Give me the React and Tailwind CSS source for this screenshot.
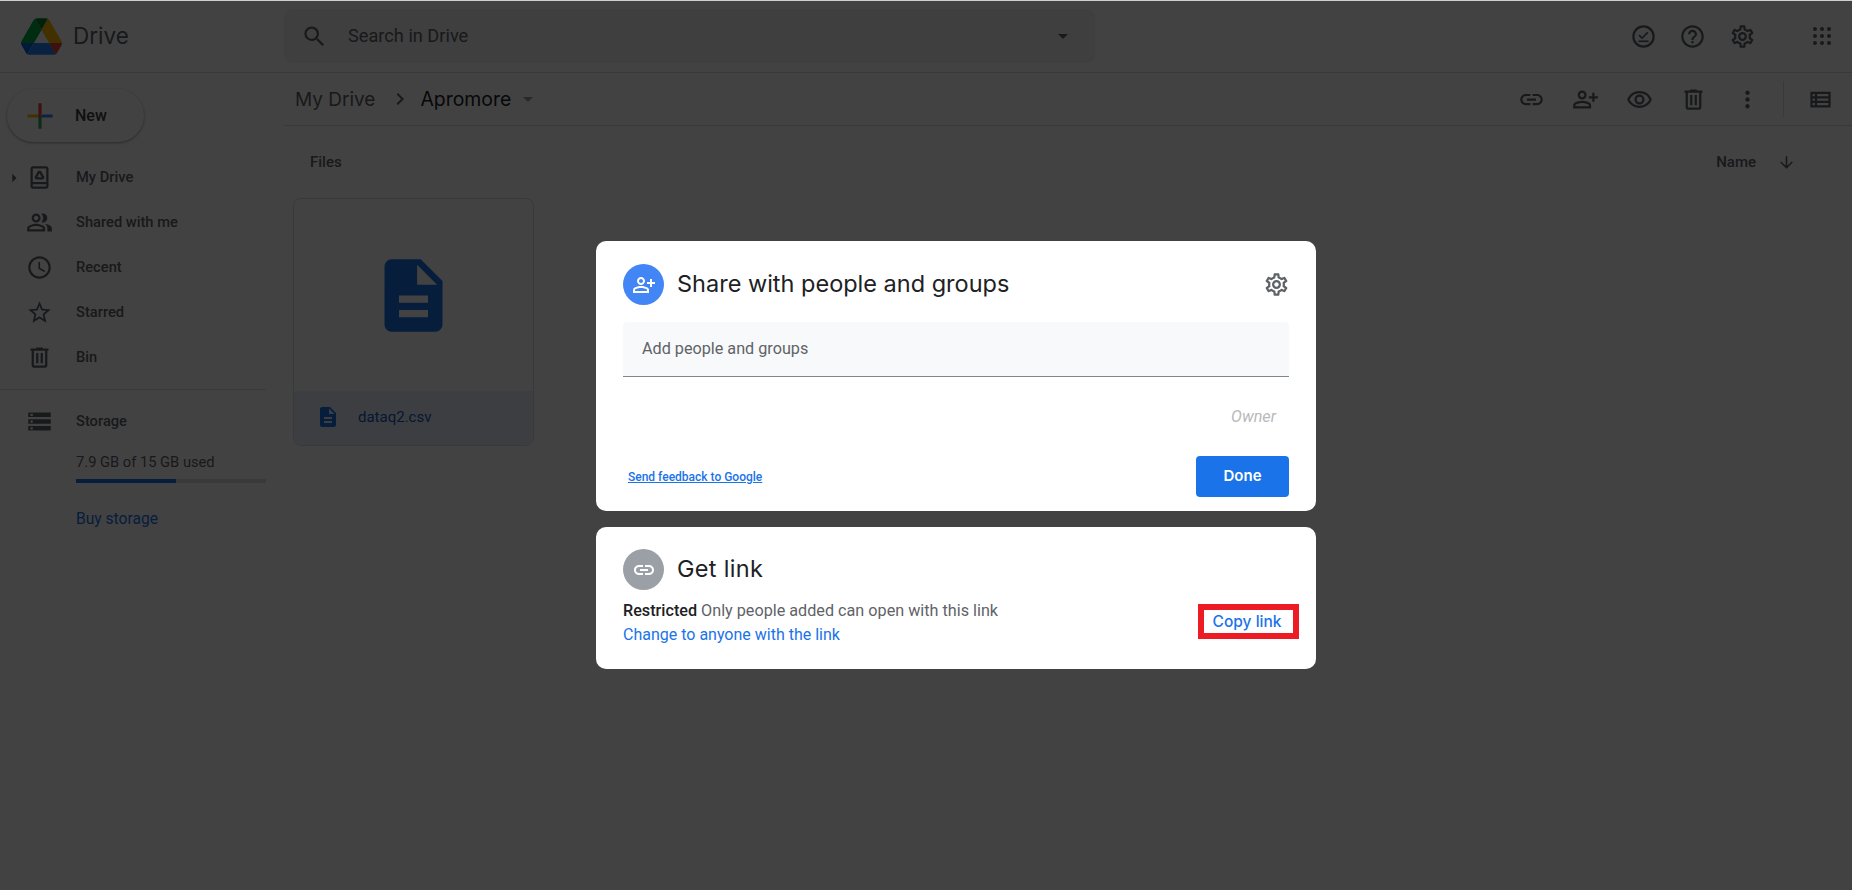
import {
  MdSearch, MdArrowDropDown, MdArrowRight, MdChevronRight, MdOutlineHelpOutline, MdOutlineSettings,
  MdLink, MdOutlinePersonAddAlt, MdOutlineRemoveRedEye, MdMoreVert, MdOutlineViewList, MdArrowDownward,
  MdOutlinePeopleAlt, MdOutlineSchedule, MdStarBorder, MdStorage, MdDescription,
} from 'react-icons/md';

const roboto = 'font-[Roboto,sans-serif]';
const gsans = 'font-[Inter,Roboto,sans-serif]';

const DriveLogo = () => (
  <svg viewBox="0 0 87.3 78" className="w-[41px] h-[37px]">
    <path d="m6.6 66.85 3.85 6.65c.8 1.4 1.95 2.5 3.3 3.3l13.75-23.8h-27.5c0 1.55.4 3.1 1.2 4.5z" fill="#0066da" />
    <path d="m43.65 25-13.75-23.8c-1.35.8-2.5 1.9-3.3 3.3l-25.4 44a9.06 9.06 0 0 0 -1.2 4.5h27.5z" fill="#00ac47" />
    <path d="m73.55 76.8c1.35-.8 2.5-1.9 3.3-3.3l1.6-2.75 7.65-13.25c.8-1.4 1.2-2.95 1.2-4.5h-27.502l5.852 11.5z" fill="#ea4335" />
    <path d="m43.65 25 13.75-23.8c-1.35-.8-2.9-1.2-4.5-1.2h-18.5c-1.6 0-3.15.45-4.5 1.2z" fill="#00832d" />
    <path d="m59.8 53h-32.3l-13.75 23.8c1.35.8 2.9 1.2 4.5 1.2h50.8c1.6 0 3.15-.45 4.5-1.2z" fill="#2684fc" />
    <path d="m73.4 26.5-12.7-22c-.8-1.4-1.95-2.5-3.3-3.3l-13.75 23.8 16.15 28h27.45c0-1.55-.4-3.1-1.2-4.5z" fill="#ffba00" />
  </svg>
);

const PlusLogo = () => (
  <svg viewBox="0 0 36 36" className="w-[38px] h-[38px]">
    <path fill="#34A853" d="M16.5 16v14h3V20z" />
    <path fill="#4285F4" d="M30 16.5H20l-4 3h14z" />
    <path fill="#FBBC05" d="M6 16.5v3h10l4-3z" />
    <path fill="#EA4335" d="M19.5 16V6h-3v14z" />
  </svg>
);

const TasksIcon = () => (
  <svg viewBox="0 0 24 24" className="w-[27px] h-[27px]" fill="currentColor">
    <path d="M12 2a10 10 0 1 0 0 20 10 10 0 0 0 0-20zm0 18a8 8 0 1 1 0-16 8 8 0 0 1 0 16z" />
    <path d="M10.7 12.4 8.6 10.3l-1.1 1.1 3.2 3.1 5.7-5.7-1.1-1z" />
    <rect x="7.5" y="15.5" width="9" height="1.5" />
  </svg>
);

const BinIcon = ({ size = 'w-6 h-6' }) => (
  <svg viewBox="0 0 24 24" className={size} fill="currentColor">
    <path d="M15 4V3H9v1H4v2h1v13c0 1.1.9 2 2 2h10c1.1 0 2-.9 2-2V6h1V4h-5zm2 15H7V6h10v13z" />
    <path d="M9 8h2v9H9zm4 0h2v9h-2z" />
  </svg>
);

const MyDriveIcon = () => (
  <svg viewBox="0 0 24 24" className="w-[27px] h-[27px]" fill="currentColor">
    <path fillRule="evenodd" d="M18 2H6C5 2 4 2.9 4 4v16c0 1.1 1 2 2 2h12c1 0 2-.9 2-2V4c0-1.1-1-2-2-2zm0 18H6v-2h12v2zm0-4H6V4h12v12z" />
    <path fillRule="evenodd" d="M10.8 6h2.4l3.3 5.7-1.2 2H8.7l-1.2-2zM12 8.2 10 11.8h4z" />
  </svg>
);

const AppsIcon = () => (
  <svg viewBox="0 0 18 18" className="w-[18px] h-[18px]" fill="currentColor">
    {[2, 9, 16].map((y) =>
      [2, 9, 16].map((x) => <circle key={`${x}-${y}`} cx={x} cy={y} r="2" />)
    )}
  </svg>
);

const navItems = [
  { label: 'My Drive', icon: <MyDriveIcon /> },
  { label: 'Shared with me', icon: <MdOutlinePeopleAlt size={27} /> },
  { label: 'Recent', icon: <MdOutlineSchedule size={27} /> },
  { label: 'Starred', icon: <MdStarBorder size={27} /> },
  { label: 'Bin', icon: <BinIcon size="w-[27px] h-[27px]" /> },
];

const Sidebar = () => (
  <aside className={`w-[284px] shrink-0 ${roboto}`}>
    <button className="ml-[7px] mt-[16px] w-[137px] h-[53px] rounded-full bg-white shadow-[0_1px_3px_rgba(60,64,67,.5)] flex items-center pl-[14px] gap-[16px]">
      <PlusLogo />
      <span className="text-[16px] font-medium text-[#3c4043]">New</span>
    </button>
    <nav className="mt-[13px] text-[#5f6368]">
      {navItems.map((item, i) => (
        <div key={item.label} className="h-[45px] flex items-center relative pl-[26px]">
          {i === 0 && <MdArrowRight size={20} className="absolute left-[4px] text-[#5f6368]" />}
          <span className="w-[27px] flex justify-center">{item.icon}</span>
          <span className="ml-[23px] text-[14.7px] font-medium">{item.label}</span>
        </div>
      ))}
    </nav>
    <div className="w-[266px] border-t border-[#dadce0] mt-[9px]" />
    <div className="h-[62px] flex items-center pl-[26px] text-[#5f6368]">
      <MdStorage size={27} />
      <span className="ml-[23px] text-[14.7px] font-medium">Storage</span>
    </div>
    <div className="pl-[76px] text-[14.7px] leading-[20px] text-[#5f6368]">7.9 GB of 15 GB used</div>
    <div className="ml-[76px] w-[190px] h-[4px] bg-[#e0e0e0] mt-[7px]">
      <div className="h-full bg-[#1a73e8]" style={{ width: `${(7.9 / 15) * 100}%` }} />
    </div>
    <div className="pl-[76px] mt-[25px] text-[15.6px] text-[#1a73e8]">Buy storage</div>
  </aside>
);

const FileCard = () => (
  <div className="ml-[9px] mt-[26px] w-[241px] h-[248px] rounded-lg border border-[#dadce0] overflow-hidden flex flex-col">
    <div className="h-[192px] flex items-center justify-center">
      <MdDescription size={87} className="text-[#1a73e8]" />
    </div>
    <div className="flex-1 bg-[#e8f0fe] flex items-center pl-[22px] gap-[18px] pb-[2px]">
      <MdDescription size={24} className="text-[#1a73e8]" />
      <span className={`text-[15px] text-[#185abc] ${roboto}`}>dataq2.csv</span>
    </div>
  </div>
);

const Main = () => (
  <main className="flex-1 min-w-0">
    <div className="h-[53px] border-b border-[#dadce0] flex items-center text-[#5f6368]">
      <span className={`ml-[11px] pt-[2px] text-[19px] ${gsans}`}>My Drive</span>
      <MdChevronRight size={24} className="ml-[13px]" />
      <span className={`ml-[8px] pt-[2px] text-[19.4px] text-[#202124] ${gsans}`}>Apromore</span>
      <MdArrowDropDown size={24} className="ml-[5px] text-[#9aa0a6]" />
      <div className="ml-auto flex items-center">
        <MdLink size={27} className="mr-[27px]" />
        <MdOutlinePersonAddAlt size={27} className="mr-[27px]" />
        <MdOutlineRemoveRedEye size={27} className="mr-[27px]" />
        <BinIcon size="w-[27px] h-[27px]" />
        <MdMoreVert size={27} className="ml-[27px]" />
        <div className="w-px h-[36px] bg-[#dadce0] ml-[22px]" />
        <MdOutlineViewList size={27} className="ml-[23px] mr-[18px]" />
      </div>
    </div>
    <div className={`h-[19px] mt-[27px] flex items-center text-[15px] font-medium text-[#5f6368] ${roboto}`}>
      <span className="ml-[26px]">Files</span>
      <span className="ml-auto">Name</span>
      <MdArrowDownward size={19} className="ml-[21px] mr-[56px]" />
    </div>
    <FileCard />
  </main>
);

const Dialogs = () => (
  <div className="absolute inset-x-0 top-px bottom-0 bg-[rgba(0,0,0,0.74)] pl-[596px] pt-[240px]">
    <section className="w-[720px] h-[270px] bg-white rounded-[10px] pt-[23px] px-[27px]">
      <div className="flex items-center h-[41px]">
        <div className="w-[41px] h-[41px] rounded-full bg-[#4285f4] flex items-center justify-center text-white">
          <MdOutlinePersonAddAlt size={24} />
        </div>
        <h2 className={`ml-[13px] -mt-[2px] text-[23.5px] text-[#202124] ${gsans}`}>Share with people and groups</h2>
        <MdOutlineSettings size={27} className="ml-auto -mr-[1px] text-[#5f6368]" />
      </div>
      <div className={`mt-[17px] h-[55px] bg-[#f8f9fa] rounded-t border-b border-[#80868b] flex items-center pl-[19px] text-[16.2px] text-[#5f6368] ${roboto}`}>
        Add people and groups
      </div>
      <div className={`mt-[29px] text-right pr-[13px] text-[16.2px] italic leading-[22px] text-[#b9b9b9] ${roboto}`}>Owner</div>
      <div className="mt-[28px] flex items-center justify-between">
        <a className={`ml-[5px] text-[12px] font-medium underline text-[#1a73e8] ${roboto}`}>Send feedback to Google</a>
        <button className={`w-[93px] h-[41px] rounded bg-[#1a73e8] text-white text-[15px] font-semibold ${gsans}`}>Done</button>
      </div>
    </section>
    <section className="mt-[16px] w-[720px] h-[142px] bg-white rounded-[10px] pt-[22px] px-[27px]">
      <div className="flex items-center h-[41px]">
        <div className="w-[41px] h-[41px] rounded-full bg-[#9aa0a6] flex items-center justify-center text-white">
          <MdLink size={24} />
        </div>
        <h2 className={`ml-[13px] -mt-[1px] text-[23.5px] tracking-[0.3px] text-[#202124] ${gsans}`}>Get link</h2>
      </div>
      <div className="flex items-center justify-between mt-[9px]">
        <div className={`leading-[24px] ${roboto}`}>
          <p className="text-[16.2px] text-[#5f6368]"><b className="font-medium text-[#202124]">Restricted</b> Only people added can open with this link</p>
          <a className="text-[16px] text-[#1a73e8]">Change to anyone with the link</a>
        </div>
        <div className={`w-[101px] h-[35px] -mr-[10px] -mt-[4px] border-[6px] border-[#ed1c24] flex items-center justify-center pt-px pr-[3px] text-[15.5px] font-medium text-[#1a73e8] ${gsans}`}>
          Copy link
        </div>
      </div>
    </section>
  </div>
);

export default function App() {
  return (
    <div className="relative w-[1852px] h-[890px] bg-[#d0d0d0] overflow-hidden">
      <div className="absolute inset-x-0 top-px bottom-0 bg-white" />
      <div className="relative">
        <header className="h-[73px] border-b border-[#dadce0] flex items-center text-[#5f6368]">
          <div className="w-[284px] flex items-center pl-[21px]">
            <DriveLogo />
            <span className={`ml-[11px] text-[22.5px] ${gsans}`}>Drive</span>
          </div>
          <div className="w-[811px] h-[54px] rounded-lg bg-[#f1f3f4] flex items-center pl-[17px]">
            <MdSearch size={27} />
            <span className={`ml-[20px] text-[18.2px] ${roboto}`}>Search in Drive</span>
            <MdArrowDropDown size={24} className="ml-auto mr-[20px]" />
          </div>
          <div className="ml-auto flex items-center">
            <TasksIcon />
            <MdOutlineHelpOutline size={27} className="ml-[22px]" />
            <MdOutlineSettings size={27} className="ml-[23px]" />
            <span className="ml-[57px] mr-[21px]"><AppsIcon /></span>
          </div>
        </header>
        <div className="flex">
          <Sidebar />
          <Main />
        </div>
      </div>
      <Dialogs />
    </div>
  );
}
